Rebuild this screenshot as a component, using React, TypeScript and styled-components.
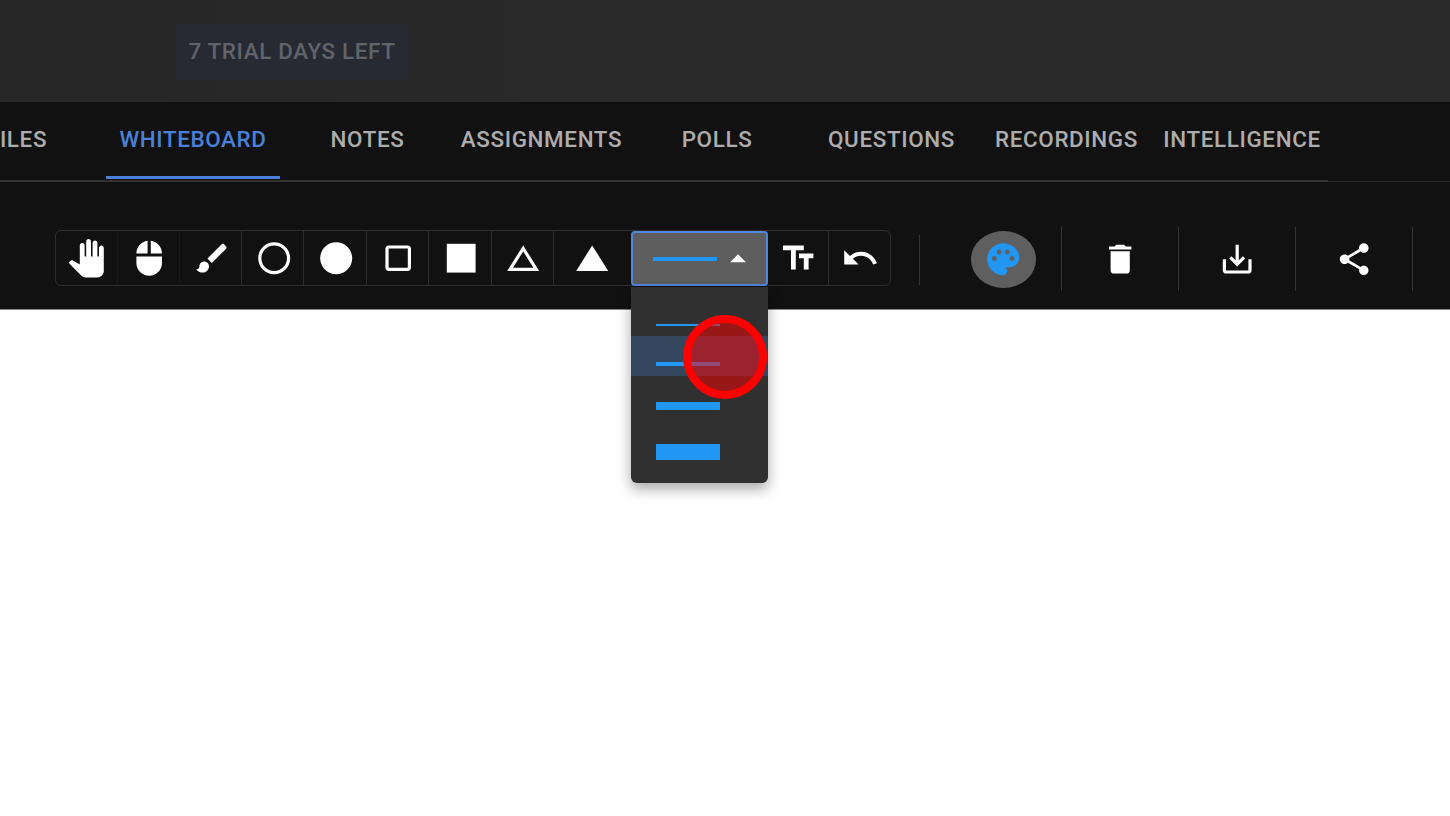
import React from "react";
import styled, { createGlobalStyle } from "styled-components";

const GlobalStyle = createGlobalStyle`
  html, body {
    margin: 0;
    padding: 0;
    background: #fff;
    font-family: Roboto, "Liberation Sans", sans-serif;
  }
`;

const Page = styled.div`
  position: relative;
  width: 1450px;
  height: 816px;
  overflow: hidden;
  background: #fff;
`;
const TopBar = styled.div`
  height: 102px;
  box-sizing: border-box;
  padding: 24px 0 0 176px;
  background: linear-gradient(90deg, #262626 0%, #2a2a2a 40%, #2a2a2a 100%);
`;
const TrialBadge = styled.div`
  width: 232px;
  height: 56px;
  box-sizing: border-box;
  padding-bottom: 2px;
  display: flex;
  align-items: center;
  justify-content: center;
  border-radius: 4px;
  background: #272a33;
  color: #62646b;
  font-size: 22.4px;
  font-weight: 500;
  letter-spacing: 0.64px;
`;
const TabBar = styled.div`
  height: 80px;
  box-sizing: border-box;
  display: flex;
  align-items: flex-start;
  background: #111;
  border-bottom: 1px solid #2b2b2b;
`;
const TabList = styled.div`
  display: flex;
  height: 80px;
  box-sizing: border-box;
  margin-left: -72px;
  border-bottom: 2px solid #333;
`;
const Tab = styled.div<{ $w: number; $active?: boolean }>`
  width: ${(p) => p.$w}px;
  height: 77px;
  box-sizing: border-box;
  display: flex;
  align-items: center;
  justify-content: center;
  font-size: 22.4px;
  font-weight: 500;
  letter-spacing: 0.64px;
  white-space: nowrap;
  color: ${(p) => (p.$active ? "#4a80d8" : "#adadad")};
  border-bottom: 3px solid ${(p) => (p.$active ? "#4a80d8" : "transparent")};
`;
const ToolBar = styled.div`
  height: 128px;
  box-sizing: border-box;
  padding: 45px 0 0 55px;
  display: flex;
  align-items: flex-start;
  background: #111;
  border-bottom: 1px solid #888;
`;
const ToolGroup = styled.div`
  display: flex;
  height: 56px;
  margin-top: 3px;
  box-sizing: border-box;
  border: 1px solid #2e2e2e;
  border-radius: 6px;
`;
const ToolCell = styled.div<{ $w: number; $nudge?: number; $line?: "faint" | "none" }>`
  position: relative;
  width: ${(p) => p.$w}px;
  box-sizing: border-box;
  padding: 1px 0 0 ${(p) => p.$nudge || 0}px;
  display: flex;
  align-items: center;
  justify-content: center;
  border-right: 1px solid
    ${(p) =>
      p.$line === "none" ? "transparent" : p.$line === "faint" ? "#191919" : "#2e2e2e"};
`;
const LinePicker = styled.div`
  position: relative;
  width: 137px;
  margin-bottom: -1px;
  box-sizing: border-box;
  display: flex;
  align-items: center;
  padding-left: 20px;
  background: #5e5e5e;
  border: 2px solid #4f85dc;
  border-radius: 4px;
`;
const PickerLine = styled.div`
  width: 64px;
  height: 4px;
  background: #2196f3;
`;
const Caret = styled.svg`
  width: 38px;
  height: 38px;
  margin-left: 2px;
  fill: #fff;
`;
const Menu = styled.div`
  position: absolute;
  top: 54px;
  left: -2px;
  width: 137px;
  box-sizing: border-box;
  padding: 11px 0 13px;
  background: #303030;
  border-radius: 0 0 6px 6px;
  box-shadow: 0 6px 14px rgba(0, 0, 0, 0.35);
  z-index: 2;
`;
const MenuItem = styled.div<{ $h: number; $selected?: boolean }>`
  height: ${(p) => p.$h}px;
  box-sizing: border-box;
  display: flex;
  align-items: flex-end;
  padding: 0 0 10px 25px;
  background: ${(p) => (p.$selected ? "#35465f" : "transparent")};
`;
const MenuLine = styled.div<{ $t: number }>`
  width: 64px;
  height: ${(p) => p.$t}px;
  background: #2196f3;
`;
const Separator = styled.div`
  width: 1px;
  height: 50px;
  margin: 8px 0 0 28px;
  background: #333;
`;
const PaletteCell = styled.div`
  width: 142px;
  height: 64px;
  box-sizing: border-box;
  display: flex;
  align-items: center;
  padding-left: 51px;
  border-right: 1px solid #333;
`;
const PaletteButton = styled.div`
  width: 65px;
  height: 57px;
  display: flex;
  align-items: center;
  justify-content: center;
  border-radius: 50%;
  background: #5f5f5f;
`;
const ActionCell = styled.div`
  width: 117px;
  height: 64px;
  box-sizing: border-box;
  display: flex;
  align-items: center;
  justify-content: center;
  border-right: 1px solid #333;
`;
const Canvas = styled.div`
  flex: 1;
  background: #fff;
`;
const Glyph = styled.svg<{ $color?: string }>`
  width: 38.4px;
  height: 38.4px;
  fill: ${(p) => p.$color || "#fff"};
  display: block;
`;
// red pointer marker from the screen recording
const ClickMarker = styled.div`
  position: absolute;
  left: 683px;
  top: 315px;
  width: 84px;
  height: 84px;
  box-sizing: border-box;
  border: 8px solid #f00;
  border-radius: 50%;
  background: rgba(255, 0, 0, 0.5);
  z-index: 3;
`;

const paths = {
  hand: "M23 5.5V20c0 2.2-1.8 4-4 4h-7.3c-1.08 0-2.1-.43-2.85-1.19L1 14.83s1.26-1.23 1.3-1.25c.22-.19.49-.29.79-.29.22 0 .42.06.6.16.04.01 4.31 2.46 4.31 2.46V4c0-.83.67-1.5 1.5-1.5S11 3.17 11 4v7h1V1.5c0-.83.67-1.5 1.5-1.5S15 .67 15 1.5V11h1V2.5c0-.83.67-1.5 1.5-1.5s1.5.67 1.5 1.5V11h1V5.5c0-.83.67-1.5 1.5-1.5s1.5.67 1.5 1.5z",
  mouse: "M13 1.07V9h7c0-4.08-3.05-7.44-7-7.93zM4 15c0 4.42 3.58 8 8 8s8-3.58 8-8v-4H4v4zm7-13.93C7.05 1.56 4 4.92 4 9h7V1.07z",
  brush: "M7 14c-1.66 0-3 1.34-3 3 0 1.31-1.16 2-2 2 .92 1.22 2.49 2 4 2 2.21 0 4-1.79 4-4 0-1.66-1.34-3-3-3zm13.71-9.37l-1.34-1.34c-.39-.39-1.02-.39-1.41 0L9 12.25 11.75 15l8.96-8.96c.39-.39.39-1.02 0-1.41z",
  ring: "M12 2C6.48 2 2 6.48 2 12s4.48 10 10 10 10-4.48 10-10S17.52 2 12 2zm0 18c-4.42 0-8-3.58-8-8s3.58-8 8-8 8 3.58 8 8-3.58 8-8 8z",
  disc: "M12 2C6.47 2 2 6.47 2 12s4.47 10 10 10 10-4.47 10-10S17.53 2 12 2z",
  frame: "M18 4H6c-1.1 0-2 .9-2 2v12c0 1.1.9 2 2 2h12c1.1 0 2-.9 2-2V6c0-1.1-.9-2-2-2zm0 14H6V6h12v12z",
  square: "M3 3h18v18H3z",
  delta: "M12 7.77L18.39 18H5.61L12 7.77M12 4L2 20h20L12 4z",
  triangle: "M12 4L2 20h20z",
  text: "M2.5 4v3h5v12h3V7h5V4h-13zm19 5h-9v3h3v7h3v-7h3V9z",
  undo: "M12.5 8c-2.65 0-5.05.99-6.9 2.6L2 7v9h9l-3.62-3.62c1.39-1.16 3.16-1.88 5.12-1.88 3.54 0 6.55 2.31 7.6 5.5l2.37-.78C21.08 11.03 17.15 8 12.5 8z",
  palette: "M12 2C6.49 2 2 6.49 2 12s4.49 10 10 10c1.38 0 2.5-1.12 2.5-2.5 0-.61-.23-1.2-.64-1.67-.08-.1-.13-.21-.13-.33 0-.28.22-.5.5-.5H16c3.31 0 6-2.69 6-6 0-4.96-4.49-9-10-9zm5.5 11c-.83 0-1.5-.67-1.5-1.5s.67-1.5 1.5-1.5 1.5.67 1.5 1.5-.67 1.5-1.5 1.5zm-3-4c-.83 0-1.5-.67-1.5-1.5S13.67 6 14.5 6s1.5.67 1.5 1.5S15.33 9 14.5 9zM5 11.5c0-.83.67-1.5 1.5-1.5s1.5.67 1.5 1.5S7.33 13 6.5 13 5 12.33 5 11.5zm6-4c0 .83-.67 1.5-1.5 1.5S8 8.33 8 7.5 8.67 6 9.5 6s1.5.67 1.5 1.5z",
  trash: "M6 19c0 1.1.9 2 2 2h8c1.1 0 2-.9 2-2V7H6v12zM19 4h-3.5l-1-1h-5l-1 1H5v2h14V4z",
  save: "M19 12v7H5v-7H3v7c0 1.1.9 2 2 2h14c1.1 0 2-.9 2-2v-7h-2zm-6 .67l2.59-2.58L17 11.5l-5 5-5-5 1.41-1.41L11 12.67V3h2z",
  share: "M18 16.08c-.76 0-1.44.3-1.96.77L8.91 12.7c.05-.23.09-.46.09-.7s-.04-.47-.09-.7l7.05-4.11c.54.5 1.25.81 2.04.81 1.66 0 3-1.34 3-3s-1.34-3-3-3-3 1.34-3 3c0 .24.04.47.09.7L8.04 9.81C7.5 9.31 6.79 9 6 9c-1.66 0-3 1.34-3 3s1.34 3 3 3c.79 0 1.5-.31 2.04-.81l7.12 4.16c-.05.21-.08.43-.08.65 0 1.61 1.31 2.92 2.92 2.92s2.92-1.31 2.92-2.92-1.31-2.92-2.92-2.92z",
};

const Icon: React.FC<{ d: string; color?: string }> = ({ d, color }) => (
  <Glyph viewBox="0 0 24 24" $color={color}>
    <path d={d} />
  </Glyph>
);

const tabs = [
  { label: "FILES", w: 178 },
  { label: "WHITEBOARD", w: 174, active: true },
  { label: "NOTES", w: 175 },
  { label: "ASSIGNMENTS", w: 173 },
  { label: "POLLS", w: 178 },
  { label: "QUESTIONS", w: 171 },
  { label: "RECORDINGS", w: 179 },
  { label: "INTELLIGENCE", w: 172 },
];

const leftTools: { d: string; w: number; nudge?: number; line?: "faint" }[] = [
  { d: paths.hand, w: 62, line: "faint" },
  { d: paths.mouse, w: 62, nudge: 2, line: "faint" },
  { d: paths.brush, w: 62, nudge: 3 },
  { d: paths.ring, w: 62, nudge: 3 },
  { d: paths.disc, w: 63, nudge: 2 },
  { d: paths.frame, w: 62, nudge: 2 },
  { d: paths.square, w: 63, nudge: 2 },
  { d: paths.delta, w: 62, nudge: 2 },
];

const lineItems = [
  { t: 2, h: 38 },
  { t: 4, h: 40, selected: true },
  { t: 8, h: 44 },
  { t: 16, h: 50 },
];

const App: React.FC = () => {
  return (
    <Page>
      <GlobalStyle />
      <TopBar>
        <TrialBadge>7 TRIAL DAYS LEFT</TrialBadge>
      </TopBar>
      <TabBar>
        <TabList>
          {tabs.map((tab) => (
            <Tab key={tab.label} $w={tab.w} $active={tab.active}>
              {tab.label}
            </Tab>
          ))}
        </TabList>
      </TabBar>
      <ToolBar>
        <ToolGroup>
          {leftTools.map((tool) => (
            <ToolCell key={tool.d} $w={tool.w} $nudge={tool.nudge} $line={tool.line}>
              <Icon d={tool.d} />
            </ToolCell>
          ))}
          <ToolCell $w={77} $line="none">
            <Icon d={paths.triangle} />
          </ToolCell>
          <LinePicker>
            <PickerLine />
            <Caret viewBox="0 0 24 24">
              <path d="M7 14l5-5 5 5z" />
            </Caret>
            <Menu>
              {lineItems.map((item) => (
                <MenuItem key={item.t} $h={item.h} $selected={item.selected}>
                  <MenuLine $t={item.t} />
                </MenuItem>
              ))}
            </Menu>
          </LinePicker>
          <ToolCell $w={61} $nudge={1}>
            <Icon d={paths.text} />
          </ToolCell>
          <ToolCell $w={61} $nudge={3} $line="none">
            <Icon d={paths.undo} />
          </ToolCell>
        </ToolGroup>
        <Separator />
        <PaletteCell>
          <PaletteButton>
            <Icon d={paths.palette} color="#2196f3" />
          </PaletteButton>
        </PaletteCell>
        <ActionCell>
          <Icon d={paths.trash} />
        </ActionCell>
        <ActionCell>
          <Icon d={paths.save} />
        </ActionCell>
        <ActionCell>
          <Icon d={paths.share} />
        </ActionCell>
      </ToolBar>
      <Canvas />
      <ClickMarker />
    </Page>
  );
};

export default App;
